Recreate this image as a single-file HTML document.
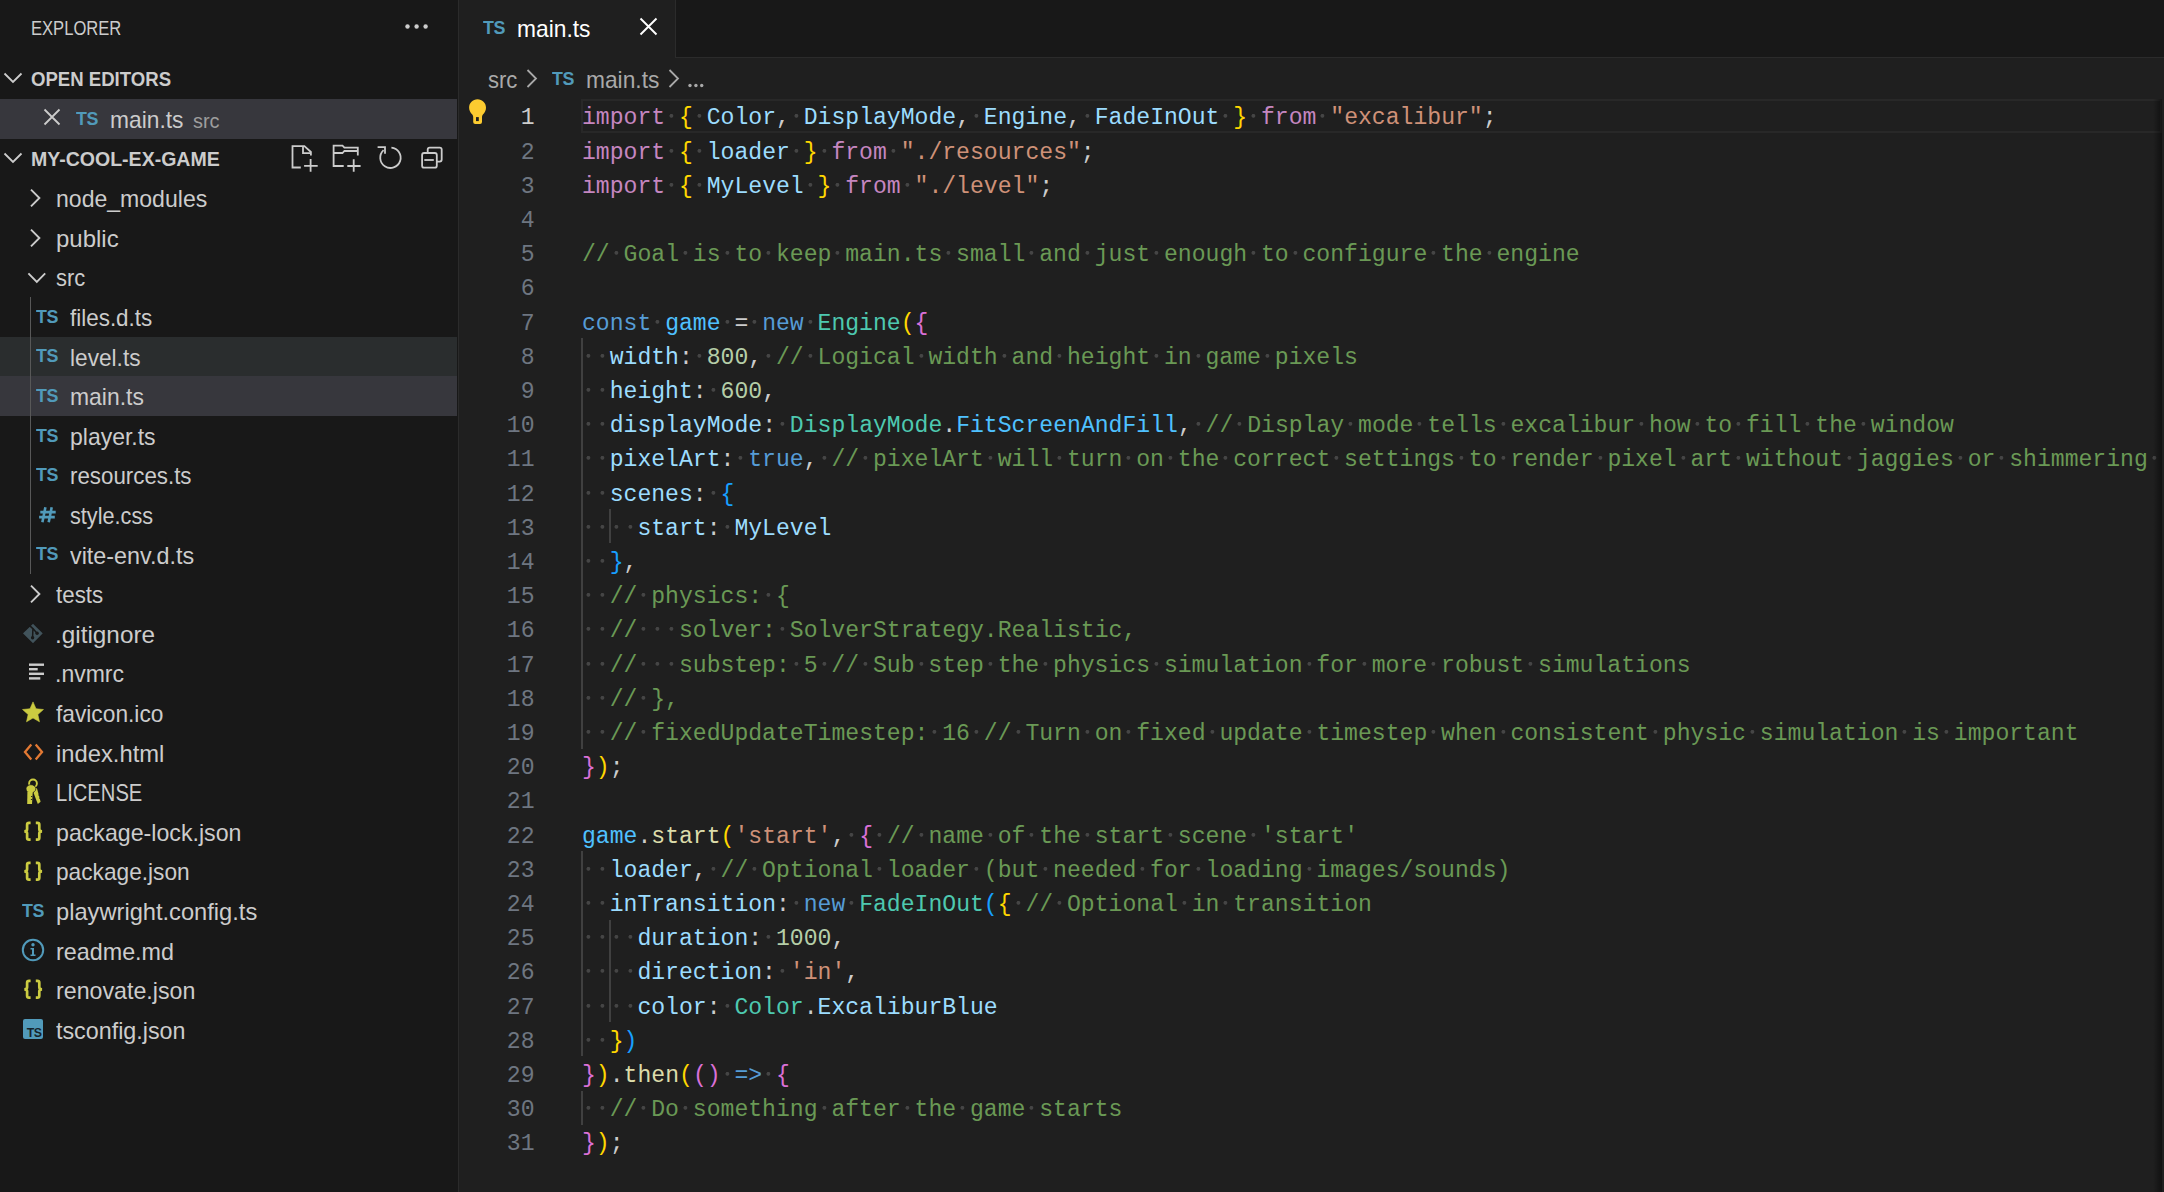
<!DOCTYPE html>
<html><head><meta charset="utf-8"><style>
html,body{margin:0;padding:0;width:2164px;height:1192px;overflow:hidden;background:#1F1F1F;font-family:"Liberation Sans",sans-serif}
*{box-sizing:border-box}
#side{position:absolute;left:0;top:0;width:458px;height:1192px;background:#181818;font-family:"Liberation Sans",sans-serif;color:#CCCCCC}
#sborder{position:absolute;left:458px;top:0;width:1px;height:1192px;background:#2B2B2B}
.ic{position:absolute;overflow:visible}
.row{position:absolute;left:0;width:457px;height:39.6px}
.row.hov{background:#2A2D2E}
.row.sel{background:#37373D}
.lbl{position:absolute;transform-origin:0 0;height:39.6px;line-height:39.6px;font-size:23.4px;white-space:pre;color:#CCCCCC}
.tsi{position:absolute;font-family:"Liberation Sans",sans-serif;font-weight:bold;color:#519ABA;line-height:24px;letter-spacing:-0.5px;transform-origin:0 0;transform:scaleX(0.95)}
.hash{position:absolute;font-family:"Liberation Sans",sans-serif;font-weight:bold;color:#519ABA;font-size:23px;line-height:28px}
.brace{position:absolute;font-family:"Liberation Sans",sans-serif;font-weight:bold;color:#CBCB41;font-size:19px;line-height:28px;letter-spacing:-1px}
.tsc{position:absolute;width:20px;height:20px;background:#519ABA;border-radius:2px}
.tsc span{position:absolute;right:1.5px;bottom:1.3px;font-size:13px;line-height:10px;font-weight:bold;color:#16232a;letter-spacing:-0.6px;transform-origin:100% 100%;transform:scaleX(0.95)}
.tig{position:absolute;width:1px;background:#585858}
.hdr{position:absolute;transform-origin:0 0;font-weight:bold;font-size:19.8px;white-space:pre;color:#CCCCCC}
#editor{position:absolute;left:459px;top:0;width:1705px;height:1192px;background:#1F1F1F}
#tabs{position:absolute;left:0;top:0;width:2164px;height:58px;background:#181818}
.cl{position:absolute;left:582px;height:34.2px;line-height:34.2px;font-family:"Liberation Mono",monospace;font-size:23.1px;white-space:pre;color:#CCCCCC}
.cl i{font-style:normal}
.ln{position:absolute;left:470.5px;width:64px;text-align:right;height:34.2px;line-height:34.2px;font-family:"Liberation Mono",monospace;font-size:23.1px;color:#6E7681}
.ln.act{color:#CCCCCC}
.ig{position:absolute;width:2px;background:#404040}
.cl b{display:inline-block;width:13.8586px;height:34.2px;vertical-align:top;background:radial-gradient(circle at 6.4px 14.8px,#454545 0,#454545 1.5px,rgba(69,69,69,0) 2.3px)}
.k{color:#C586C0}.s{color:#569CD6}.v{color:#9CDCFE}.c{color:#4FC1FF}.t{color:#4EC9B0}.str{color:#CE9178}.n{color:#B5CEA8}.cm{color:#6A9955}.f{color:#DCDCAA}.p{color:#CCCCCC}
.b1{color:#FFD700}.b2{color:#DA70D6}.b3{color:#179FFF}
.ui{font-family:"Liberation Sans",sans-serif;position:absolute;white-space:pre}
</style></head><body>
<div id="side">
<div class="ui" style="left:31px;top:12px;font-size:19.8px;line-height:33px;color:#CCCCCC;transform-origin:0 0;transform:scaleX(0.838)">EXPLORER</div>
<svg class="ic" style="left:403px;top:22px" width="28" height="10" viewBox="0 0 28 10"><circle cx="4.5" cy="4.5" r="2.2" fill="#CCCCCC"/><circle cx="13.6" cy="4.5" r="2.2" fill="#CCCCCC"/><circle cx="22.6" cy="4.5" r="2.2" fill="#CCCCCC"/></svg>
<svg class="ic" style="left:3px;top:71px" width="20" height="14" viewBox="0 0 20 14"><path d="M1.5 2.5 L10 11 L18.5 2.5" fill="none" stroke="#CCCCCC" stroke-width="1.8"/></svg>
<div class="hdr" style="left:31px;top:60.4px;line-height:39.6px;transform:scaleX(0.939)">OPEN EDITORS</div>
<div class="row sel" style="top:99px"></div>
<svg class="ic" style="left:43px;top:108px" width="18" height="18" viewBox="0 0 18 18"><path d="M1.5 1.5 L16.5 16.5 M16.5 1.5 L1.5 16.5" fill="none" stroke="#CCCCCC" stroke-width="1.8"/></svg>
<div class="tsi" style="left:76.0px;top:107.0px;font-size:18.8px">TS</div>
<div class="lbl" style="left:110px;top:100.5px;transform:scaleX(0.974)">main.ts</div><div class="lbl" style="left:193px;top:100.5px;font-size:21px;color:#9D9D9D;transform:scaleX(0.95)">src</div>
<svg class="ic" style="left:3px;top:151px" width="20" height="14" viewBox="0 0 20 14"><path d="M1.5 2.5 L10 11 L18.5 2.5" fill="none" stroke="#CCCCCC" stroke-width="1.8"/></svg>
<div class="hdr" style="left:31px;top:139.6px;line-height:39.6px;transform:scaleX(0.987)">MY-COOL-EX-GAME</div>
<svg class="ic" style="left:286px;top:140px" width="164" height="36" viewBox="286 140 164 36">
 <g fill="none" stroke="#CCCCCC" stroke-width="1.8">
 <path d="M300.8 167.5 L292.5 167.5 L292.5 146.2 L304.4 146.2 L310.9 152 L310.9 155.6"/>
 <path d="M303 146.2 L303 153.1 L310.9 153.1"/>
 <path d="M304.1 165.8 L317.7 165.8 M310.6 159 L310.6 171.7"/>
 <path d="M343.7 166 L333.6 166 L333.6 145.7 L342.5 145.7 L344.4 147.7 L357.8 147.7 L357.8 155.5"/>
 <path d="M333.6 153 L342.5 153 L344.4 151 L357.8 151"/>
 <path d="M347.3 166 L360.6 166 M353.7 159.3 L353.7 171.7"/>
 <path d="M391.4 147.6 A10.2 10.2 0 1 1 383.6 150.2"/>
 <path d="M377.6 147.2 L385 147.2 L385 153.7"/>
 <path d="M427.7 153 L427.7 149.6 Q427.7 147.6 429.7 147.6 L439.7 147.6 Q441.7 147.6 441.7 149.6 L441.7 159.6 Q441.7 161.6 439.7 161.6 L436.8 161.6"/>
 <rect x="422.1" y="153" width="14.7" height="14.7" rx="2"/>
 <path d="M424.3 160 L433.8 160"/>
 </g>
</svg>
<div class="row" style="top:178.20px"></div>
<svg class="ic" style="left:27.0px;top:186.0px" width="20" height="24" viewBox="0 0 20 24"><path d="M4 3.6 L12.4 12 L4 20.4" fill="none" stroke="#CCCCCC" stroke-width="1.9"/></svg>
<div class="lbl" style="left:56.0px;top:180.20px;transform:scaleX(0.9855)">node_modules</div>
<div class="row" style="top:217.80px"></div>
<svg class="ic" style="left:27.0px;top:225.6px" width="20" height="24" viewBox="0 0 20 24"><path d="M4 3.6 L12.4 12 L4 20.4" fill="none" stroke="#CCCCCC" stroke-width="1.9"/></svg>
<div class="lbl" style="left:56.0px;top:219.80px;transform:scaleX(1.0250)">public</div>
<div class="row" style="top:257.40px"></div>
<svg class="ic" style="left:24.5px;top:269.7px" width="24" height="16" viewBox="0 0 24 16"><path d="M3.4 3.4 L11.8 11.8 L20.2 3.4" fill="none" stroke="#CCCCCC" stroke-width="1.9"/></svg>
<div class="lbl" style="left:56.0px;top:259.40px;transform:scaleX(0.9367)">src</div>
<div class="row" style="top:297.00px"></div>
<div class="tsi" style="left:36.0px;top:304.8px;font-size:18.8px">TS</div>
<div class="lbl" style="left:70.0px;top:299.00px;transform:scaleX(0.9588)">files.d.ts</div>
<div class="row hov" style="top:336.60px"></div>
<div class="tsi" style="left:36.0px;top:344.4px;font-size:18.8px">TS</div>
<div class="lbl" style="left:70.0px;top:338.60px;transform:scaleX(0.9690)">level.ts</div>
<div class="row sel" style="top:376.20px"></div>
<div class="tsi" style="left:36.0px;top:384.0px;font-size:18.8px">TS</div>
<div class="lbl" style="left:70.0px;top:378.20px;transform:scaleX(0.9797)">main.ts</div>
<div class="row" style="top:415.80px"></div>
<div class="tsi" style="left:36.0px;top:423.6px;font-size:18.8px">TS</div>
<div class="lbl" style="left:70.0px;top:417.80px;transform:scaleX(0.9826)">player.ts</div>
<div class="row" style="top:455.40px"></div>
<div class="tsi" style="left:36.0px;top:463.2px;font-size:18.8px">TS</div>
<div class="lbl" style="left:70.0px;top:457.40px;transform:scaleX(0.9540)">resources.ts</div>
<div class="row" style="top:495.00px"></div>
<svg class="ic" style="left:36px;top:503.8px" width="22" height="22" viewBox="36 503.8 22 22"><path d="M45.4 507 L42.4 522 M51.7 507 L48.7 522 M40.3 511.9 L55.7 511.9 M39.1 516.9 L54.8 516.9" fill="none" stroke="#519ABA" stroke-width="2.6"/></svg>
<div class="lbl" style="left:70.0px;top:497.00px;transform:scaleX(0.9261)">style.css</div>
<div class="row" style="top:534.60px"></div>
<div class="tsi" style="left:36.0px;top:542.4px;font-size:18.8px">TS</div>
<div class="lbl" style="left:70.0px;top:536.60px;transform:scaleX(0.9984)">vite-env.d.ts</div>
<div class="row" style="top:574.20px"></div>
<svg class="ic" style="left:27.0px;top:582.0px" width="20" height="24" viewBox="0 0 20 24"><path d="M4 3.6 L12.4 12 L4 20.4" fill="none" stroke="#CCCCCC" stroke-width="1.9"/></svg>
<div class="lbl" style="left:56.0px;top:576.20px;transform:scaleX(0.9551)">tests</div>
<div class="row" style="top:613.80px"></div>
<svg class="ic" style="left:22px;top:623.2px" width="22" height="22" viewBox="0 0 22 22"><path d="M10.8 0.9 Q11 0.7 11.2 0.9 L20.6 10.2 Q20.8 10.4 20.6 10.6 L11.2 19.9 Q11 20.1 10.8 19.9 L1.1 10.6 Q0.9 10.4 1.1 10.2 Z" fill="#41535B"/><path d="M7.3 2.4 L10.9 5.6 L10.6 14.6 M10.9 5.6 L15 10.2" fill="none" stroke="#181818" stroke-width="1.5"/><circle cx="10.6" cy="14.7" r="1.7" fill="#181818"/><circle cx="15.1" cy="10.3" r="1.7" fill="#181818"/></svg>
<div class="lbl" style="left:54.5px;top:615.80px;transform:scaleX(1.0394)">.gitignore</div>
<div class="row" style="top:653.40px"></div>
<svg class="ic" style="left:29px;top:662.4px" width="16" height="18" viewBox="0 0 16 18"><rect x="0" y="1.5" width="15" height="2.4" fill="#CCCCCC"/><rect x="0" y="6" width="8.7" height="2.4" fill="#CCCCCC"/><rect x="0" y="10.6" width="15" height="2.4" fill="#CCCCCC"/><rect x="0" y="15.2" width="11.3" height="2.4" fill="#CCCCCC"/></svg>
<div class="lbl" style="left:54.5px;top:655.40px;transform:scaleX(0.9838)">.nvmrc</div>
<div class="row" style="top:693.00px"></div>
<svg class="ic" style="left:22px;top:701.3px" width="22" height="22" viewBox="0 0 22 22"><path d="M11.00 0.90 L14.00 7.77 L21.46 8.50 L15.85 13.48 L17.47 20.80 L11.00 17.00 L4.53 20.80 L6.15 13.48 L0.54 8.50 L8.00 7.77 Z" fill="#CBCB41" stroke="#CBCB41" stroke-width="0.6" stroke-linejoin="round"/></svg>
<div class="lbl" style="left:56.0px;top:695.00px;transform:scaleX(0.9718)">favicon.ico</div>
<div class="row" style="top:732.60px"></div>
<svg class="ic" style="left:23px;top:744.4px" width="21" height="16" viewBox="0 0 21 16"><path d="M8.3 0.6 L2 8 L8.3 15.4 M12.7 0.6 L19 8 L12.7 15.4" fill="none" stroke="#E37933" stroke-width="2.3"/></svg>
<div class="lbl" style="left:56.0px;top:734.60px;transform:scaleX(1.0163)">index.html</div>
<div class="row" style="top:772.20px"></div>
<svg class="ic" style="left:18px;top:772.0px" width="30" height="38" viewBox="0 0 30 38"><circle cx="15" cy="11.4" r="3.9" fill="none" stroke="#CBCB41" stroke-width="1.9"/><path d="M16.2 15 L19 16.5 L22.6 29.8 L19.8 32 L15.8 21.5 Z" fill="#CBCB41"/><path d="M20.3 23 L22 23.4 M21 26 L22.7 26.4" stroke="#181818" stroke-width="0.8"/><ellipse cx="12.9" cy="16.8" rx="4.9" ry="4.1" fill="#CBCB41" stroke="#181818" stroke-width="0.7"/><path d="M9.4 19.5 L14.8 19.5 L14 32 L9.2 32 Z" fill="#CBCB41"/><path d="M14.3 24.5 L13 24.5 M14.1 27.5 L12.9 27.5" stroke="#181818" stroke-width="0.9"/></svg>
<div class="lbl" style="left:56.0px;top:774.20px;transform:scaleX(0.8619)">LICENSE</div>
<div class="row" style="top:811.80px"></div>
<svg class="ic" style="left:18px;top:815.0px" width="30" height="33" viewBox="0 0 30 33"><path d="M12.6 7.9 L11 7.9 Q9.1 7.9 9.1 9.8 L9.1 14.3 Q9.1 16.3 6.3 16.3 Q9.1 16.3 9.1 18.3 L9.1 22.8 Q9.1 24.7 11 24.7 L12.6 24.7" fill="none" stroke="#CBCB41" stroke-width="2.7"/><path d="M17.8 7.9 L19.4 7.9 Q21.3 7.9 21.3 9.8 L21.3 14.3 Q21.3 16.3 24.1 16.3 Q21.3 16.3 21.3 18.3 L21.3 22.8 Q21.3 24.7 19.4 24.7 L17.8 24.7" fill="none" stroke="#CBCB41" stroke-width="2.7"/></svg>
<div class="lbl" style="left:56.0px;top:813.80px;transform:scaleX(0.9903)">package-lock.json</div>
<div class="row" style="top:851.40px"></div>
<svg class="ic" style="left:18px;top:854.6px" width="30" height="33" viewBox="0 0 30 33"><path d="M12.6 7.9 L11 7.9 Q9.1 7.9 9.1 9.8 L9.1 14.3 Q9.1 16.3 6.3 16.3 Q9.1 16.3 9.1 18.3 L9.1 22.8 Q9.1 24.7 11 24.7 L12.6 24.7" fill="none" stroke="#CBCB41" stroke-width="2.7"/><path d="M17.8 7.9 L19.4 7.9 Q21.3 7.9 21.3 9.8 L21.3 14.3 Q21.3 16.3 24.1 16.3 Q21.3 16.3 21.3 18.3 L21.3 22.8 Q21.3 24.7 19.4 24.7 L17.8 24.7" fill="none" stroke="#CBCB41" stroke-width="2.7"/></svg>
<div class="lbl" style="left:56.0px;top:853.40px;transform:scaleX(0.9699)">package.json</div>
<div class="row" style="top:891.00px"></div>
<div class="tsi" style="left:22.0px;top:898.8px;font-size:18.8px">TS</div>
<div class="lbl" style="left:56.0px;top:893.00px;transform:scaleX(1.0117)">playwright.config.ts</div>
<div class="row" style="top:930.60px"></div>
<svg class="ic" style="left:21px;top:938.4px" width="24" height="24" viewBox="0 0 24 24"><circle cx="12" cy="12" r="10.2" fill="none" stroke="#519ABA" stroke-width="2"/><circle cx="12" cy="6.8" r="1.7" fill="#519ABA"/><path d="M9.5 10 L13 10 L13 16.5 L14.5 16.5 L14.5 18 L9.5 18 L9.5 16.5 L11 16.5 L11 11.5 L9.5 11.5 Z" fill="#519ABA"/></svg>
<div class="lbl" style="left:56.0px;top:932.60px;transform:scaleX(0.9974)">readme.md</div>
<div class="row" style="top:970.20px"></div>
<svg class="ic" style="left:18px;top:973.4px" width="30" height="33" viewBox="0 0 30 33"><path d="M12.6 7.9 L11 7.9 Q9.1 7.9 9.1 9.8 L9.1 14.3 Q9.1 16.3 6.3 16.3 Q9.1 16.3 9.1 18.3 L9.1 22.8 Q9.1 24.7 11 24.7 L12.6 24.7" fill="none" stroke="#CBCB41" stroke-width="2.7"/><path d="M17.8 7.9 L19.4 7.9 Q21.3 7.9 21.3 9.8 L21.3 14.3 Q21.3 16.3 24.1 16.3 Q21.3 16.3 21.3 18.3 L21.3 22.8 Q21.3 24.7 19.4 24.7 L17.8 24.7" fill="none" stroke="#CBCB41" stroke-width="2.7"/></svg>
<div class="lbl" style="left:56.0px;top:972.20px;transform:scaleX(0.9920)">renovate.json</div>
<div class="row" style="top:1009.80px"></div>
<div class="tsc" style="left:23px;top:1019.3px"><span>TS</span></div>
<div class="lbl" style="left:56.0px;top:1011.80px;transform:scaleX(0.9961)">tsconfig.json</div>
<div class="tig" style="left:30px;top:297.0px;height:277.2px"></div>
</div>
<div id="sborder"></div>
<div id="tabs" style="left:459px;width:1705px">
 <div style="position:absolute;left:0;top:0;width:216px;height:58px;background:#1F1F1F"></div>
 <div style="position:absolute;left:216px;top:0;width:1px;height:58px;background:#2B2B2B"></div>
 <div style="position:absolute;left:217px;top:57px;width:1488px;height:1px;background:#2B2B2B"></div>
</div>
<div class="tsi" style="left:483.0px;top:16.0px;font-size:18.8px">TS</div>
<div class="ui" style="left:517px;top:12px;font-size:23.4px;line-height:34px;color:#FFFFFF;transform-origin:0 0;transform:scaleX(0.974)">main.ts</div>
<svg class="ic" style="left:639px;top:17px" width="19" height="19" viewBox="0 0 19 19"><path d="M1.5 1.5 L17.5 17.5 M17.5 1.5 L1.5 17.5" fill="none" stroke="#FFFFFF" stroke-width="1.9"/></svg>
<div class="ui" style="left:488px;top:62px;font-size:23.4px;line-height:36px;color:#A9A9A9;transform-origin:0 0;transform:scaleX(0.943)">src</div>
<svg class="ic" style="left:525px;top:68px" width="14" height="22" viewBox="0 0 14 22"><path d="M2.5 2 L11 10.5 L2.5 19" fill="none" stroke="#A9A9A9" stroke-width="1.8"/></svg>
<div class="tsi" style="left:551.5px;top:67.0px;font-size:18.8px">TS</div>
<div class="ui" style="left:586px;top:62px;font-size:23.4px;line-height:36px;color:#A9A9A9;transform-origin:0 0;transform:scaleX(0.973)">main.ts</div>
<svg class="ic" style="left:667px;top:68px" width="14" height="22" viewBox="0 0 14 22"><path d="M2.5 2 L11 10.5 L2.5 19" fill="none" stroke="#A9A9A9" stroke-width="1.8"/></svg>
<svg class="ic" style="left:686px;top:82px" width="20" height="8" viewBox="686 82 20 8"><circle cx="690" cy="85.5" r="1.7" fill="#A9A9A9"/><circle cx="695.9" cy="85.5" r="1.7" fill="#A9A9A9"/><circle cx="701.7" cy="85.5" r="1.7" fill="#A9A9A9"/></svg>
<div style="position:absolute;left:581px;top:99px;width:1581px;height:34px;border:2px solid #282828"></div>
<svg class="ic" style="left:462px;top:96px" width="30" height="34" viewBox="462 96 30 34"><path d="M477.5 99.3 C472.8 99.3 469.1 103 469.1 107.7 C469.1 110.6 470.6 112.6 472.3 114.6 Q473.2 115.7 473.2 117 L473.2 122 Q473.2 124 475.2 124 L480 124 Q482 124 482 122 L482 117 Q482 115.7 482.9 114.6 C484.6 112.6 486 110.6 486 107.7 C486 103 482.2 99.3 477.5 99.3 Z" fill="#FCCB30"/><rect x="476" y="117.1" width="2.8" height="4" fill="#1F1F1F"/></svg>
<div style="position:absolute;left:0;top:0;width:2162px;height:1192px;overflow:hidden">
<div class="ln act" style="top:101.30px">1</div>
<div class="cl" style="top:101.30px"><i class="k">import</i><b></b><i class="b1">{</i><b></b><i class="v">Color</i><i class="p">,</i><b></b><i class="v">DisplayMode</i><i class="p">,</i><b></b><i class="v">Engine</i><i class="p">,</i><b></b><i class="v">FadeInOut</i><b></b><i class="b1">}</i><b></b><i class="k">from</i><b></b><i class="str">&quot;excalibur&quot;</i><i class="p">;</i></div>
<div class="ln" style="top:135.50px">2</div>
<div class="cl" style="top:135.50px"><i class="k">import</i><b></b><i class="b1">{</i><b></b><i class="v">loader</i><b></b><i class="b1">}</i><b></b><i class="k">from</i><b></b><i class="str">&quot;./resources&quot;</i><i class="p">;</i></div>
<div class="ln" style="top:169.70px">3</div>
<div class="cl" style="top:169.70px"><i class="k">import</i><b></b><i class="b1">{</i><b></b><i class="v">MyLevel</i><b></b><i class="b1">}</i><b></b><i class="k">from</i><b></b><i class="str">&quot;./level&quot;</i><i class="p">;</i></div>
<div class="ln" style="top:203.90px">4</div>
<div class="cl" style="top:203.90px"></div>
<div class="ln" style="top:238.10px">5</div>
<div class="cl" style="top:238.10px"><i class="cm">//</i><b></b><i class="cm">Goal</i><b></b><i class="cm">is</i><b></b><i class="cm">to</i><b></b><i class="cm">keep</i><b></b><i class="cm">main.ts</i><b></b><i class="cm">small</i><b></b><i class="cm">and</i><b></b><i class="cm">just</i><b></b><i class="cm">enough</i><b></b><i class="cm">to</i><b></b><i class="cm">configure</i><b></b><i class="cm">the</i><b></b><i class="cm">engine</i></div>
<div class="ln" style="top:272.30px">6</div>
<div class="cl" style="top:272.30px"></div>
<div class="ln" style="top:306.50px">7</div>
<div class="cl" style="top:306.50px"><i class="s">const</i><b></b><i class="c">game</i><b></b><i class="p">=</i><b></b><i class="s">new</i><b></b><i class="t">Engine</i><i class="b1">(</i><i class="b2">{</i></div>
<div class="ln" style="top:340.70px">8</div>
<div class="cl" style="top:340.70px"><b></b><b></b><i class="v">width</i><i class="p">:</i><b></b><i class="n">800</i><i class="p">,</i><b></b><i class="cm">//</i><b></b><i class="cm">Logical</i><b></b><i class="cm">width</i><b></b><i class="cm">and</i><b></b><i class="cm">height</i><b></b><i class="cm">in</i><b></b><i class="cm">game</i><b></b><i class="cm">pixels</i></div>
<div class="ln" style="top:374.90px">9</div>
<div class="cl" style="top:374.90px"><b></b><b></b><i class="v">height</i><i class="p">:</i><b></b><i class="n">600</i><i class="p">,</i></div>
<div class="ln" style="top:409.10px">10</div>
<div class="cl" style="top:409.10px"><b></b><b></b><i class="v">displayMode</i><i class="p">:</i><b></b><i class="t">DisplayMode</i><i class="p">.</i><i class="c">FitScreenAndFill</i><i class="p">,</i><b></b><i class="cm">//</i><b></b><i class="cm">Display</i><b></b><i class="cm">mode</i><b></b><i class="cm">tells</i><b></b><i class="cm">excalibur</i><b></b><i class="cm">how</i><b></b><i class="cm">to</i><b></b><i class="cm">fill</i><b></b><i class="cm">the</i><b></b><i class="cm">window</i></div>
<div class="ln" style="top:443.30px">11</div>
<div class="cl" style="top:443.30px"><b></b><b></b><i class="v">pixelArt</i><i class="p">:</i><b></b><i class="s">true</i><i class="p">,</i><b></b><i class="cm">//</i><b></b><i class="cm">pixelArt</i><b></b><i class="cm">will</i><b></b><i class="cm">turn</i><b></b><i class="cm">on</i><b></b><i class="cm">the</i><b></b><i class="cm">correct</i><b></b><i class="cm">settings</i><b></b><i class="cm">to</i><b></b><i class="cm">render</i><b></b><i class="cm">pixel</i><b></b><i class="cm">art</i><b></b><i class="cm">without</i><b></b><i class="cm">jaggies</i><b></b><i class="cm">or</i><b></b><i class="cm">shimmering</i><b></b><i class="cm">artifacts</i></div>
<div class="ln" style="top:477.50px">12</div>
<div class="cl" style="top:477.50px"><b></b><b></b><i class="v">scenes</i><i class="p">:</i><b></b><i class="b3">{</i></div>
<div class="ln" style="top:511.70px">13</div>
<div class="cl" style="top:511.70px"><b></b><b></b><b></b><b></b><i class="v">start</i><i class="p">:</i><b></b><i class="v">MyLevel</i></div>
<div class="ln" style="top:545.90px">14</div>
<div class="cl" style="top:545.90px"><b></b><b></b><i class="b3">}</i><i class="p">,</i></div>
<div class="ln" style="top:580.10px">15</div>
<div class="cl" style="top:580.10px"><b></b><b></b><i class="cm">//</i><b></b><i class="cm">physics:</i><b></b><i class="cm">{</i></div>
<div class="ln" style="top:614.30px">16</div>
<div class="cl" style="top:614.30px"><b></b><b></b><i class="cm">//</i><b></b><b></b><b></b><i class="cm">solver:</i><b></b><i class="cm">SolverStrategy.Realistic,</i></div>
<div class="ln" style="top:648.50px">17</div>
<div class="cl" style="top:648.50px"><b></b><b></b><i class="cm">//</i><b></b><b></b><b></b><i class="cm">substep:</i><b></b><i class="cm">5</i><b></b><i class="cm">//</i><b></b><i class="cm">Sub</i><b></b><i class="cm">step</i><b></b><i class="cm">the</i><b></b><i class="cm">physics</i><b></b><i class="cm">simulation</i><b></b><i class="cm">for</i><b></b><i class="cm">more</i><b></b><i class="cm">robust</i><b></b><i class="cm">simulations</i></div>
<div class="ln" style="top:682.70px">18</div>
<div class="cl" style="top:682.70px"><b></b><b></b><i class="cm">//</i><b></b><i class="cm">},</i></div>
<div class="ln" style="top:716.90px">19</div>
<div class="cl" style="top:716.90px"><b></b><b></b><i class="cm">//</i><b></b><i class="cm">fixedUpdateTimestep:</i><b></b><i class="cm">16</i><b></b><i class="cm">//</i><b></b><i class="cm">Turn</i><b></b><i class="cm">on</i><b></b><i class="cm">fixed</i><b></b><i class="cm">update</i><b></b><i class="cm">timestep</i><b></b><i class="cm">when</i><b></b><i class="cm">consistent</i><b></b><i class="cm">physic</i><b></b><i class="cm">simulation</i><b></b><i class="cm">is</i><b></b><i class="cm">important</i></div>
<div class="ln" style="top:751.10px">20</div>
<div class="cl" style="top:751.10px"><i class="b2">}</i><i class="b1">)</i><i class="p">;</i></div>
<div class="ln" style="top:785.30px">21</div>
<div class="cl" style="top:785.30px"></div>
<div class="ln" style="top:819.50px">22</div>
<div class="cl" style="top:819.50px"><i class="c">game</i><i class="p">.</i><i class="f">start</i><i class="b1">(</i><i class="str">&#x27;start&#x27;</i><i class="p">,</i><b></b><i class="b2">{</i><b></b><i class="cm">//</i><b></b><i class="cm">name</i><b></b><i class="cm">of</i><b></b><i class="cm">the</i><b></b><i class="cm">start</i><b></b><i class="cm">scene</i><b></b><i class="cm">&#x27;start&#x27;</i></div>
<div class="ln" style="top:853.70px">23</div>
<div class="cl" style="top:853.70px"><b></b><b></b><i class="v">loader</i><i class="p">,</i><b></b><i class="cm">//</i><b></b><i class="cm">Optional</i><b></b><i class="cm">loader</i><b></b><i class="cm">(but</i><b></b><i class="cm">needed</i><b></b><i class="cm">for</i><b></b><i class="cm">loading</i><b></b><i class="cm">images/sounds)</i></div>
<div class="ln" style="top:887.90px">24</div>
<div class="cl" style="top:887.90px"><b></b><b></b><i class="v">inTransition</i><i class="p">:</i><b></b><i class="s">new</i><b></b><i class="t">FadeInOut</i><i class="b3">(</i><i class="b1">{</i><b></b><i class="cm">//</i><b></b><i class="cm">Optional</i><b></b><i class="cm">in</i><b></b><i class="cm">transition</i></div>
<div class="ln" style="top:922.10px">25</div>
<div class="cl" style="top:922.10px"><b></b><b></b><b></b><b></b><i class="v">duration</i><i class="p">:</i><b></b><i class="n">1000</i><i class="p">,</i></div>
<div class="ln" style="top:956.30px">26</div>
<div class="cl" style="top:956.30px"><b></b><b></b><b></b><b></b><i class="v">direction</i><i class="p">:</i><b></b><i class="str">&#x27;in&#x27;</i><i class="p">,</i></div>
<div class="ln" style="top:990.50px">27</div>
<div class="cl" style="top:990.50px"><b></b><b></b><b></b><b></b><i class="v">color</i><i class="p">:</i><b></b><i class="t">Color</i><i class="p">.</i><i class="v">ExcaliburBlue</i></div>
<div class="ln" style="top:1024.70px">28</div>
<div class="cl" style="top:1024.70px"><b></b><b></b><i class="b1">}</i><i class="b3">)</i></div>
<div class="ln" style="top:1058.90px">29</div>
<div class="cl" style="top:1058.90px"><i class="b2">}</i><i class="b1">)</i><i class="p">.</i><i class="f">then</i><i class="b1">(</i><i class="b2">(</i><i class="b2">)</i><b></b><i class="s">=&gt;</i><b></b><i class="b2">{</i></div>
<div class="ln" style="top:1093.10px">30</div>
<div class="cl" style="top:1093.10px"><b></b><b></b><i class="cm">//</i><b></b><i class="cm">Do</i><b></b><i class="cm">something</i><b></b><i class="cm">after</i><b></b><i class="cm">the</i><b></b><i class="cm">game</i><b></b><i class="cm">starts</i></div>
<div class="ln" style="top:1127.30px">31</div>
<div class="cl" style="top:1127.30px"><i class="b2">}</i><i class="b1">)</i><i class="p">;</i></div>
<div class="ig" style="left:581.00px;top:338.20px;height:410.40px"></div>
<div class="ig" style="left:608.72px;top:509.20px;height:34.20px"></div>
<div class="ig" style="left:581.00px;top:851.20px;height:205.20px"></div>
<div class="ig" style="left:608.72px;top:919.60px;height:102.60px"></div>
<div class="ig" style="left:581.00px;top:1090.60px;height:34.20px"></div>
</div>
<div style="position:absolute;left:2153px;top:99px;width:9px;height:1093px;background:linear-gradient(to right,rgba(0,0,0,0),rgba(0,0,0,0.45))"></div>
</body></html>
